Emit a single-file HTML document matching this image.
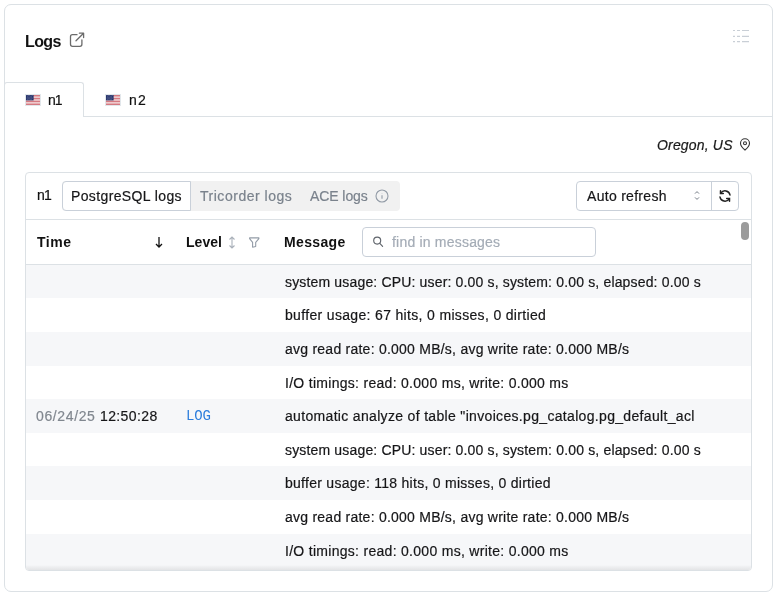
<!DOCTYPE html>
<html><head><meta charset="utf-8">
<style>
*{box-sizing:border-box;margin:0;padding:0}
html,body{width:777px;height:596px;overflow:hidden;background:#fff;font-family:"Liberation Sans",sans-serif}
.abs{position:absolute}
.tx{position:absolute;white-space:nowrap;line-height:20px;z-index:5;will-change:transform;-webkit-text-stroke:0.2px currentColor}
</style></head><body>
<div id="card" class="abs" style="left:4px;top:4px;width:769px;height:588px;border:1px solid #dce1e5;border-radius:7px;background:#fff"></div>
<svg class="abs" style="left:66px;top:30px;z-index:5" width="22" height="20" viewBox="0 0 22 20" fill="none" stroke="#6b6b6b" stroke-width="1.3" stroke-linecap="round" stroke-linejoin="round"><path d="M11 4.7H6.5A2 2 0 0 0 4.5 6.7V14.3A2 2 0 0 0 6.5 16.3H13.9A2 2 0 0 0 15.9 14.3V10"/><path d="M10 10.7L17.6 3.2M13.4 3.2H17.6V7.5"/></svg>
<svg class="abs" style="left:732px;top:29px" width="18" height="15" viewBox="0 0 18 15" fill="none" stroke="#c9cfd6" stroke-width="1.2"><path d="M1 1.5h2M5 1.5h3M10 1.5h7M1 7.3h2M5 7.3h3M10 7.3h7M1 12.7h2M5 12.7h3M10 12.7h7"/></svg>
<div class="abs" style="left:4px;top:82px;width:80px;height:35px;border:1px solid #dce1e5;border-bottom:none;border-radius:3px 3px 0 0;background:#fff"></div>
<div class="abs" style="left:83px;top:116px;width:690px;height:1px;background:#dce1e5"></div>
<svg class="abs" style="left:25px;top:94px" width="16" height="12" viewBox="0 0 16 12"><rect x="0.5" y="0.5" width="15" height="11" fill="#fff" stroke="#e2e7eb"/><g fill="#c9525b"><rect x="1" y="1.000" width="14" height="0.769"/><rect x="1" y="2.538" width="14" height="0.769"/><rect x="1" y="4.077" width="14" height="0.769"/><rect x="1" y="5.615" width="14" height="0.769"/><rect x="1" y="7.154" width="14" height="0.769"/><rect x="1" y="8.692" width="14" height="0.769"/><rect x="1" y="10.231" width="14" height="0.769"/></g><rect x="1" y="1" width="7.6" height="5.38" fill="#26336b"/><g fill="#c8cde0"><circle cx="2.00" cy="1.80" r="0.32"/><circle cx="3.35" cy="1.80" r="0.32"/><circle cx="4.70" cy="1.80" r="0.32"/><circle cx="6.05" cy="1.80" r="0.32"/><circle cx="7.40" cy="1.80" r="0.32"/><circle cx="2.67" cy="2.90" r="0.32"/><circle cx="4.02" cy="2.90" r="0.32"/><circle cx="5.37" cy="2.90" r="0.32"/><circle cx="6.72" cy="2.90" r="0.32"/><circle cx="2.00" cy="4.00" r="0.32"/><circle cx="3.35" cy="4.00" r="0.32"/><circle cx="4.70" cy="4.00" r="0.32"/><circle cx="6.05" cy="4.00" r="0.32"/><circle cx="7.40" cy="4.00" r="0.32"/><circle cx="2.67" cy="5.10" r="0.32"/><circle cx="4.02" cy="5.10" r="0.32"/><circle cx="5.37" cy="5.10" r="0.32"/><circle cx="6.72" cy="5.10" r="0.32"/></g></svg>
<svg class="abs" style="left:105px;top:94px" width="16" height="12" viewBox="0 0 16 12"><rect x="0.5" y="0.5" width="15" height="11" fill="#fff" stroke="#e2e7eb"/><g fill="#c9525b"><rect x="1" y="1.000" width="14" height="0.769"/><rect x="1" y="2.538" width="14" height="0.769"/><rect x="1" y="4.077" width="14" height="0.769"/><rect x="1" y="5.615" width="14" height="0.769"/><rect x="1" y="7.154" width="14" height="0.769"/><rect x="1" y="8.692" width="14" height="0.769"/><rect x="1" y="10.231" width="14" height="0.769"/></g><rect x="1" y="1" width="7.6" height="5.38" fill="#26336b"/><g fill="#c8cde0"><circle cx="2.00" cy="1.80" r="0.32"/><circle cx="3.35" cy="1.80" r="0.32"/><circle cx="4.70" cy="1.80" r="0.32"/><circle cx="6.05" cy="1.80" r="0.32"/><circle cx="7.40" cy="1.80" r="0.32"/><circle cx="2.67" cy="2.90" r="0.32"/><circle cx="4.02" cy="2.90" r="0.32"/><circle cx="5.37" cy="2.90" r="0.32"/><circle cx="6.72" cy="2.90" r="0.32"/><circle cx="2.00" cy="4.00" r="0.32"/><circle cx="3.35" cy="4.00" r="0.32"/><circle cx="4.70" cy="4.00" r="0.32"/><circle cx="6.05" cy="4.00" r="0.32"/><circle cx="7.40" cy="4.00" r="0.32"/><circle cx="2.67" cy="5.10" r="0.32"/><circle cx="4.02" cy="5.10" r="0.32"/><circle cx="5.37" cy="5.10" r="0.32"/><circle cx="6.72" cy="5.10" r="0.32"/></g></svg>
<svg class="abs" style="left:739px;top:138px" width="12" height="13" viewBox="0 0 12 13" fill="none" stroke="#333" stroke-width="1.1"><path d="M6 12C3 9.5 1.5 7.3 1.5 5.2A4.5 4.5 0 0 1 10.5 5.2C10.5 7.3 9 9.5 6 12Z"/><circle cx="6" cy="5.2" r="1.5"/></svg>
<div id="tcard" class="abs" style="left:25px;top:172px;width:727px;height:399px;border:1px solid #dce1e5;border-radius:4px;overflow:hidden;background:#fff">
  <div class="abs" style="left:36px;top:8px;width:338px;height:30px;background:#f1f1f1;border-radius:4px"></div>
  <div class="abs" style="left:36px;top:8px;width:129px;height:30px;border:1px solid #c9d0d9;border-radius:4px 0 0 4px;background:#fff"></div>
  <svg class="abs" style="left:349px;top:16px" width="14" height="14" viewBox="0 0 14 14" fill="none" stroke="#929ba6" stroke-width="1.1"><circle cx="7" cy="7" r="6"/><path d="M7 6.2v3.6M7 4.2v.4"/></svg>
  <div class="abs" style="left:550px;top:8px;width:163px;height:30px;border:1px solid #c9d0d9;border-radius:4px;background:#fff"></div>
  <svg class="abs" style="left:667px;top:15px" width="8" height="15" viewBox="0 0 8 15" fill="none" stroke="#747c86" stroke-width="1"><path d="M2 5.6L4 3.6l2 2M2 9.4L4 11.4l2-2"/></svg>
  <div class="abs" style="left:685px;top:8px;width:1px;height:30px;background:#c9d0d9"></div>
  <svg class="abs" style="left:692px;top:16px" width="14" height="14" viewBox="0 0 14 14" fill="none" stroke="#222" stroke-width="1.5" stroke-linecap="round"><path d="M12 6A5 5 0 0 0 2.8 4.2M2 8a5 5 0 0 0 9.2 1.8"/><path d="M2.5 1.8v2.8h2.8M11.5 12.2V9.4H8.7"/></svg>
  <div class="abs" style="left:0;top:46px;width:727px;height:1px;background:#dce1e5"></div>
  <svg class="abs" style="left:129px;top:63px" width="8" height="12" viewBox="0 0 8 12" fill="none" stroke="#111" stroke-width="1.3"><path d="M4 1v10M1 8l3 3 3-3"/></svg>
  <svg class="abs" style="left:202px;top:62.5px" width="8" height="13" viewBox="0 0 8 13" fill="none" stroke="#aab1ba" stroke-width="1.1"><path d="M4 1v11M1.5 3.5L4 1l2.5 2.5M1.5 9.5L4 12l2.5-2.5"/></svg>
  <svg class="abs" style="left:222px;top:64px" width="12" height="12" viewBox="0 0 12 12" fill="none" stroke="#939ca7" stroke-width="1.1" stroke-linejoin="round"><path d="M1.6 0.9H10.9V1.6L7.7 5.4V9.5L4.6 10.2V5.4L1.6 1.6Z"/></svg>
  <div class="abs" style="left:336px;top:54px;width:234px;height:30px;border:1px solid #c9d0d9;border-radius:4px;background:#fff"></div>
  <svg class="abs" style="left:346px;top:63px" width="12" height="12" viewBox="0 0 12 12" fill="none" stroke="#60656c" stroke-width="1.15" stroke-linecap="round"><circle cx="5.2" cy="4.6" r="3.5"/><path d="M7.8 7.3L10.6 10.3"/></svg>
  <div class="abs" style="left:0;top:91px;width:727px;height:1px;background:#dce1e5"></div>
  <div class="abs" style="left:0;top:92px;width:725px;height:33px;background:#f6f7f9"></div><div class="abs" style="left:0;top:125px;width:725px;height:34px;background:#fff"></div><div class="abs" style="left:0;top:159px;width:725px;height:34px;background:#f6f7f9"></div><div class="abs" style="left:0;top:193px;width:725px;height:33px;background:#fff"></div><div class="abs" style="left:0;top:226px;width:725px;height:34px;background:#f6f7f9"></div><div class="abs" style="left:0;top:260px;width:725px;height:33px;background:#fff"></div><div class="abs" style="left:0;top:293px;width:725px;height:34px;background:#f6f7f9"></div><div class="abs" style="left:0;top:327px;width:725px;height:34px;background:#fff"></div><div class="abs" style="left:0;top:361px;width:725px;height:36px;background:#f6f7f9"></div>
  <div class="abs" style="left:0;top:392px;width:727px;height:5px;background:linear-gradient(to bottom,rgba(0,0,0,0),rgba(0,0,0,0.035) 40%,rgba(0,0,0,0.075))"></div>
  <div class="abs" style="left:715px;top:49px;width:8px;height:18px;border-radius:4px;background:#9b9b9b"></div>
</div>
<div id="title" class="tx" style="left:25.30px;top:32.00px;font-size:16px;letter-spacing:-0.607px;font-weight:bold;font-style:normal;font-family:'Liberation Sans',sans-serif;color:#111;-webkit-text-stroke:0">Logs</div>
<div id="tn1" class="tx" style="left:48.20px;top:90.00px;font-size:14px;letter-spacing:-1.000px;font-weight:normal;font-style:normal;font-family:'Liberation Sans',sans-serif;color:#111">n1</div>
<div id="tn2" class="tx" style="left:128.70px;top:90.00px;font-size:14px;letter-spacing:1.147px;font-weight:normal;font-style:normal;font-family:'Liberation Sans',sans-serif;color:#111">n2</div>
<div id="loc" class="tx" style="left:656.60px;top:135.00px;font-size:14px;letter-spacing:0.173px;font-weight:normal;font-style:italic;font-family:'Liberation Sans',sans-serif;color:#1a1a1a">Oregon, US</div>
<div id="bn1" class="tx" style="left:37.20px;top:185.00px;font-size:14px;letter-spacing:-0.800px;font-weight:normal;font-style:normal;font-family:'Liberation Sans',sans-serif;color:#111">n1</div>
<div id="pg" class="tx" style="left:71.05px;top:186.00px;font-size:14px;letter-spacing:0.375px;font-weight:normal;font-style:normal;font-family:'Liberation Sans',sans-serif;color:#161618">PostgreSQL logs</div>
<div id="tri" class="tx" style="left:199.70px;top:186.00px;font-size:14px;letter-spacing:0.523px;font-weight:normal;font-style:normal;font-family:'Liberation Sans',sans-serif;color:#7a828c">Tricorder logs</div>
<div id="ace" class="tx" style="left:310.00px;top:186.00px;font-size:14px;letter-spacing:-0.082px;font-weight:normal;font-style:normal;font-family:'Liberation Sans',sans-serif;color:#7a828c">ACE logs</div>
<div id="auto" class="tx" style="left:587.40px;top:186.00px;font-size:14px;letter-spacing:0.292px;font-weight:normal;font-style:normal;font-family:'Liberation Sans',sans-serif;color:#161618">Auto refresh</div>
<div id="htime" class="tx" style="left:36.60px;top:232.00px;font-size:14px;letter-spacing:0.519px;font-weight:bold;font-style:normal;font-family:'Liberation Sans',sans-serif;color:#111;-webkit-text-stroke:0">Time</div>
<div id="hlevel" class="tx" style="left:185.60px;top:232.00px;font-size:14px;letter-spacing:0.040px;font-weight:bold;font-style:normal;font-family:'Liberation Sans',sans-serif;color:#111;-webkit-text-stroke:0">Level</div>
<div id="hmsg" class="tx" style="left:284.30px;top:232.00px;font-size:14px;letter-spacing:0.344px;font-weight:bold;font-style:normal;font-family:'Liberation Sans',sans-serif;color:#111;-webkit-text-stroke:0">Message</div>
<div id="find" class="tx" style="left:392.00px;top:232.00px;font-size:14px;letter-spacing:0.203px;font-weight:normal;font-style:normal;font-family:'Liberation Sans',sans-serif;color:#a4acb6">find in messages</div>
<div id="date" class="tx" style="left:36.20px;top:406.00px;font-size:14px;letter-spacing:0.628px;font-weight:normal;font-style:normal;font-family:'Liberation Sans',sans-serif;color:#80878f">06/24/25</div>
<div id="time" class="tx" style="left:100.30px;top:406.00px;font-size:14px;letter-spacing:0.385px;font-weight:normal;font-style:normal;font-family:'Liberation Sans',sans-serif;color:#161618">12:50:28</div>
<div id="lvl" class="tx" style="left:186.40px;top:406.00px;font-size:14px;letter-spacing:-0.150px;font-weight:normal;font-style:normal;font-family:'Liberation Mono',monospace;color:#2c7ddc;-webkit-text-stroke:0">LOG</div>
<div id="m1" class="tx" style="left:285.20px;top:272.00px;font-size:14px;letter-spacing:0.163px;font-weight:normal;font-style:normal;font-family:'Liberation Sans',sans-serif;color:#161618">system usage: CPU: user: 0.00 s, system: 0.00 s, elapsed: 0.00 s</div>
<div id="m2" class="tx" style="left:284.70px;top:305.00px;font-size:14px;letter-spacing:0.333px;font-weight:normal;font-style:normal;font-family:'Liberation Sans',sans-serif;color:#161618">buffer usage: 67 hits, 0 misses, 0 dirtied</div>
<div id="m3" class="tx" style="left:284.70px;top:339.00px;font-size:14px;letter-spacing:0.241px;font-weight:normal;font-style:normal;font-family:'Liberation Sans',sans-serif;color:#161618">avg read rate: 0.000 MB/s, avg write rate: 0.000 MB/s</div>
<div id="m4" class="tx" style="left:284.70px;top:373.00px;font-size:14px;letter-spacing:0.292px;font-weight:normal;font-style:normal;font-family:'Liberation Sans',sans-serif;color:#161618">I/O timings: read: 0.000 ms, write: 0.000 ms</div>
<div id="m5" class="tx" style="left:284.70px;top:406.00px;font-size:14px;letter-spacing:0.326px;font-weight:normal;font-style:normal;font-family:'Liberation Sans',sans-serif;color:#161618">automatic analyze of table &quot;invoices.pg_catalog.pg_default_acl</div>
<div id="m6" class="tx" style="left:285.20px;top:440.00px;font-size:14px;letter-spacing:0.163px;font-weight:normal;font-style:normal;font-family:'Liberation Sans',sans-serif;color:#161618">system usage: CPU: user: 0.00 s, system: 0.00 s, elapsed: 0.00 s</div>
<div id="m7" class="tx" style="left:284.70px;top:473.00px;font-size:14px;letter-spacing:0.275px;font-weight:normal;font-style:normal;font-family:'Liberation Sans',sans-serif;color:#161618">buffer usage: 118 hits, 0 misses, 0 dirtied</div>
<div id="m8" class="tx" style="left:284.70px;top:507.00px;font-size:14px;letter-spacing:0.241px;font-weight:normal;font-style:normal;font-family:'Liberation Sans',sans-serif;color:#161618">avg read rate: 0.000 MB/s, avg write rate: 0.000 MB/s</div>
<div id="m9" class="tx" style="left:284.70px;top:541.00px;font-size:14px;letter-spacing:0.292px;font-weight:normal;font-style:normal;font-family:'Liberation Sans',sans-serif;color:#161618">I/O timings: read: 0.000 ms, write: 0.000 ms</div>
</body></html>
